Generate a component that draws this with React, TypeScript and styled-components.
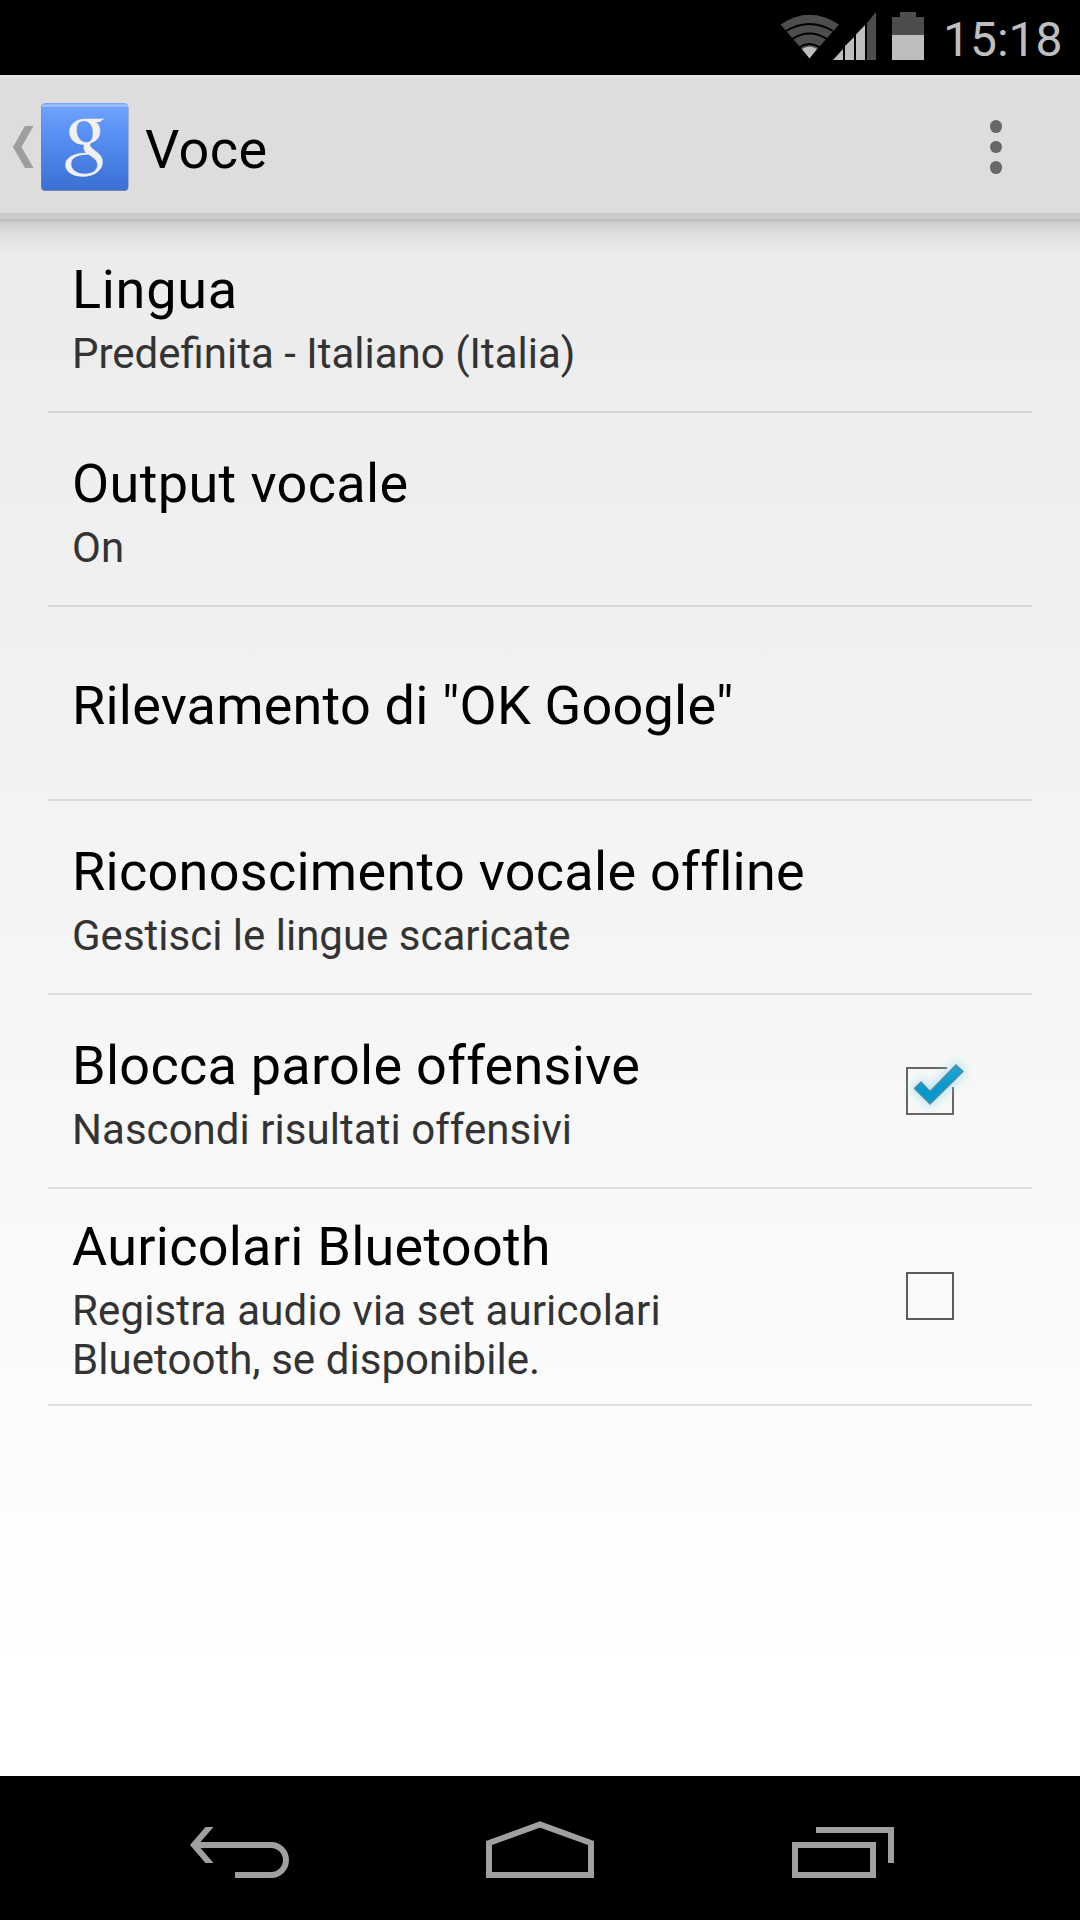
import React from 'react';
import styled, { createGlobalStyle } from 'styled-components';

const Global = createGlobalStyle`
  body { margin: 0; background: #000; }
  * { box-sizing: border-box; }
`;
const Screen = styled.div`
  width: 1080px; height: 1920px; display: flex; flex-direction: column;
  font-family: Roboto, sans-serif; color: #000; overflow: hidden;
`;
const StatusBar = styled.header`
  height: 75px; background: #000; display: flex; justify-content: flex-end; flex-shrink: 0;
`;
const StatusIcons = styled.svg`width: 180px; height: 75px; display: block;`;
const Clock = styled.time`
  width: 140px; padding: 11px 0 0 3px; font-size: 48px; line-height: 58px; color: #bebebe; white-space: nowrap;
`;
const Content = styled.main`
  flex: 1; display: flex; flex-direction: column;
  background: linear-gradient(#e9e9e9, #fff 93%);
`;
const ActionBar = styled.div`
  height: 147px; flex-shrink: 0; display: flex; align-items: flex-start; background: #ddd;
  border-bottom: 3px solid #c1c1c1; box-shadow: inset 0 -6px #cbcbcb, inset 0 2px #e4e4e4;
`;
const BarShadow = styled.div`
  height: 36px; flex-shrink: 0;
  background: linear-gradient(rgba(0,0,0,.12), rgba(0,0,0,.055) 35%, rgba(0,0,0,.02) 65%, transparent);
`;
const UpIcon = styled.svg`width: 136px; height: 144px; display: block; flex-shrink: 0;`;
const Title = styled.h1<{ $ls?: number }>`
  margin: 0; font-size: 54px; line-height: 64px; font-weight: 400; white-space: nowrap;
  letter-spacing: ${p => p.$ls ?? 0}px;
`;
const BarTitle = styled(Title)`padding: 43px 0 0 9px; flex: 1;`;
const MenuButton = styled.div`
  width: 168px; height: 144px; display: flex; flex-direction: column; align-items: center;
  justify-content: center; gap: 7.7px;
`;
const Dot = styled.i`width: 12px; height: 12.8px; border-radius: 50%; background: #686868;`;
const List = styled.ul`
  list-style: none; margin: -39px 0 0; padding: 0 48px; display: flex; flex-direction: column;
`;
const Row = styled.li<{ $h: number }>`
  height: ${p => p.$h + 2}px; display: flex; align-items: center; padding: 0 24px;
  border-bottom: 2px solid rgba(0,0,0,.105);
`;
const Texts = styled.div`flex: 1; padding-top: 5px;`;
const Summary = styled.p`
  margin: 7px 0 0; font-size: 42px; line-height: 49px; color: #333;
`;
const Line = styled.span<{ $ls: number }>`display: block; letter-spacing: ${p => p.$ls}px;`;
const Check = styled.svg`width: 110px; height: 90px; display: block; margin: 0 18px 0 0;`;
const NavBar = styled.nav`
  height: 144px; background: #000; flex-shrink: 0; display: flex; justify-content: center; gap: 140px;
`;
const NavIcon = styled.svg`
  width: 160px; height: 144px; fill: none; stroke: #a0a0a0; stroke-width: 6;
`;

interface Item { title: string; ls: number; lines?: [string, number][]; h?: number; checked?: boolean; }
const items: Item[] = [
  { title: 'Lingua', ls: 0.7, lines: [['Predefinita - Italiano (Italia)', 0]] },
  { title: 'Output vocale', ls: 0.38, lines: [['On', 0]] },
  { title: 'Rilevamento di "OK Google"', ls: 0.2 },
  { title: 'Riconoscimento vocale offline', ls: 0.28, lines: [['Gestisci le lingue scaricate', 0]] },
  { title: 'Blocca parole offensive', ls: 0.27, lines: [['Nascondi risultati offensivi', 0.04]], checked: true },
  {
    title: 'Auricolari Bluetooth', ls: 0.25, h: 215, checked: false,
    lines: [['Registra audio via set auricolari', 0.14], ['Bluetooth, se disponibile.', 0.05]],
  },
];

const TICK = 'M34.500 48.500L41 42L50 51.500L76 25L83 31.500L50 64Z';
const LETTER = 'M103.500 119H85C76 119 69.500 124.500 69.500 132C69.500 140 76 145 84 144.500C83.500 149 84 151 86.500 153C75 153 65.500 157 65.500 165C65.500 172 73 176.500 83 176.500C95 176.500 102.500 170 102.500 162C102.500 156 98 153 94 150C90 147 89 145 91 143C97 141 100 137 100 131C100 127 98.500 124 96 122H100ZM84 121C90 121 93 127 93 133C93 139 91 142.500 86.500 142.500C80 142.500 76.500 136 76.500 130C76.500 124 79 121 84 121ZM88.500 154.500C93 157.500 97.500 160 97.500 165C97.500 170 93 174 85 174C76 174 71 169.500 71 164C71 157.500 78 154.500 88.500 154.500Z';

const CheckBox = ({ on }: { on: boolean }) => (
  <Check viewBox={on ? '0 6 110 90' : '0 2 110 90'}>
    {on ? (
      <>
        <defs>
          <filter id="glow" x="-50%" y="-50%" width="200%" height="200%"><feGaussianBlur stdDeviation="5" /></filter>
          <linearGradient id="tick" x1="0" y1="0" x2="0" y2="1"><stop stopColor="#22a6d6" /><stop offset=".6" stopColor="#0499cf" /></linearGradient>
        </defs>
        <path d="M67 28H27V74H73V47" fill="none" stroke="#666" strokeWidth="2" />
        <path d={TICK} fill="#8fdcf5" stroke="#8fdcf5" strokeWidth="5" opacity=".7" filter="url(#glow)" />
        <path d={TICK} fill="url(#tick)" stroke="#5c8795" strokeWidth="1.300" />
      </>
    ) : <rect x="27" y="23" width="46" height="46" fill="none" stroke="#5c5c5c" strokeWidth="2" />}
  </Check>
);

export default function App() {
  return (
    <Screen>
      <Global />
      <StatusBar>
        <StatusIcons viewBox="760 0 180 75">
          <path d="M780.500 24.500Q809.500 5 839 24.500L809.500 58Z" fill="#4d4d4d" />
          <path d="M802 49Q809.500 44 817 49L809.500 58.500Z" fill="#bebebe" />
          <path d="M786 31Q809.500 17 833 31M792 39Q809.500 28 827 39M799 47.500Q809.500 40.500 820 47.500" fill="none" stroke="#000" strokeWidth="2" />
          <path d="M833 60L843 49V60ZM845 60V46L854 37V60ZM856 60V34.500L865 25V60Z" fill="#bebebe" />
          <path d="M867 60V23L876 12V60Z" fill="#4d4d4d" />
          <path d="M892 35V17H900V12H916V17H924V35Z" fill="#4d4d4d" />
          <path d="M892 35H924V60H892Z" fill="#bebebe" />
        </StatusIcons>
        <Clock>15:18</Clock>
      </StatusBar>
      <Content>
        <ActionBar>
          <UpIcon viewBox="0 75 136 144">
            <defs>
              <linearGradient id="tile" x1="0" y1="0" x2="0" y2="1">
                <stop stopColor="#75a6fb" /><stop offset=".3" stopColor="#5c93f7" /><stop offset="1" stopColor="#3a70d4" />
              </linearGradient>
            </defs>
            <path d="M25 126H33.500L21.500 147L33.500 168H25L13 147Z" fill="#9e9e9e" />
            <rect x="41" y="104" width="87.500" height="87" rx="4" fill="#3d5f9e" opacity=".7" />
            <rect x="41.500" y="103" width="86.500" height="87" rx="4" fill="url(#tile)" />
            <path d="M43 107Q43 105.500 45 105.500H125Q127 105.500 127 107" fill="none" stroke="#a7c8ff" strokeWidth="2" />
            <path fillRule="evenodd" fill="#2858ad" opacity=".5" transform="translate(0 1)" d={LETTER} />
            <path fillRule="evenodd" fill="#f2f1f2" stroke="#f2f1f2" strokeWidth=".5" d={LETTER} />
          </UpIcon>
          <BarTitle $ls={0.4}>Voce</BarTitle>
          <MenuButton><Dot /><Dot /><Dot /></MenuButton>
        </ActionBar>
        <BarShadow />
        <List>
          {items.map(i => (
            <Row key={i.title} $h={i.h ?? 192}>
              <Texts>
                <Title as="h2" $ls={i.ls}>{i.title}</Title>
                {i.lines && (
                  <Summary>{i.lines.map(([text, ls]) => <Line key={text} $ls={ls}>{text}</Line>)}</Summary>
                )}
              </Texts>
              {i.checked !== undefined && <CheckBox on={i.checked} />}
            </Row>
          ))}
        </List>
      </Content>
      <NavBar>
        <NavIcon viewBox="160 1776 160 144">
          <path d="M235 1875H271A15 15 0 0 0 271 1845H198" />
          <path d="M205.500 1827H213.500L200.500 1842V1848L213.500 1863H205.500L190 1845Z" fill="#a0a0a0" stroke="none" />
        </NavIcon>
        <NavIcon viewBox="460 1776 160 144"><path d="M489 1875V1843L540 1824.500L591 1843V1875Z" /></NavIcon>
        <NavIcon viewBox="760 1776 160 144"><path d="M795 1845H873V1875H795ZM816 1830H891V1863" /></NavIcon>
      </NavBar>
    </Screen>
  );
}
